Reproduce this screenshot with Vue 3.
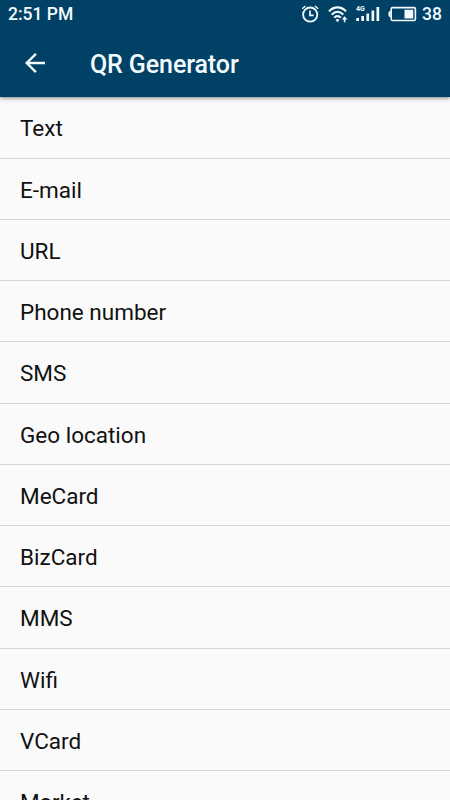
<script setup>
const items = [
  'Text', 'E-mail', 'URL', 'Phone number', 'SMS', 'Geo location',
  'MeCard', 'BizCard', 'MMS', 'Wifi', 'VCard', 'Market',
]
</script>

<template>
  <div class="screen">
    <header class="header">
      <div class="status">
        <span class="time">2:51 PM</span>
        <div class="indicators">
          <svg class="alarm" width="18" height="18" viewBox="0 0 18 18" fill="none" stroke="currentColor">
            <circle cx="9.2" cy="9.6" r="7.1" stroke-width="1.8" />
            <path d="M1.3 3.8 4.4 1M17.1 3.8 14 1" stroke-width="1.5" />
            <path d="M9 5.6V10.3H12.6" stroke-width="1.7" />
          </svg>
          <svg class="wifi" width="20" height="18" viewBox="0 0 20 18" fill="none" stroke="currentColor">
            <path d="M1 6.4C5.8 1 13.2 1 18 6.4M3.7 9.6C7.2 5.8 11.8 5.8 15.3 9.6M6.2 12.6C8.1 10.6 10.9 10.6 12.8 12.6" stroke-width="2.1" />
            <path d="M7.5 14.7Q9.5 13.1 11.5 14.7L9.5 17.2Z" fill="currentColor" stroke="none" />
            <path d="M16.6 11.2 19.4 14.5H17.4V17.2H15.8V14.5H13.8Z" fill="currentColor" stroke="none" />
          </svg>
          <div class="signal">
            <span class="network">4G</span>
            <svg width="24" height="16" viewBox="0 0 24 16" fill="currentColor">
              <path d="M.3 12H3V15H.3ZM5.3 10H8V15H5.3ZM10.4 7.5H13.1V15H10.4ZM15.5 4.5H18.2V15H15.5ZM20.5 1H23.2V15H20.5Z" />
            </svg>
          </div>
          <svg class="battery" width="29" height="16" viewBox="0 0 29 16">
            <rect x="3.2" y="1.6" width="24.2" height="12.9" rx="1.5" fill="none" stroke="currentColor" stroke-width="1.6" />
            <path d="M2.6 5H1.5Q.3 6 .3 8T1.5 11H2.6ZM16.5 3.7H25.2V12.4H16.5Z" fill="currentColor" />
          </svg>
          <span class="percent">38</span>
        </div>
      </div>
      <div class="toolbar">
        <svg class="back" width="22" height="22" viewBox="0 0 22 22" fill="none" stroke="currentColor" stroke-width="2.4">
          <path d="M21 11H3M11.9 1.8 2.7 11 11.9 20.2" />
        </svg>
        <h1 class="title">QR Generator</h1>
      </div>
    </header>
    <ul class="list">
      <li v-for="item in items" :key="item" class="row">{{ item }}</li>
    </ul>
  </div>
</template>

<style>
body { margin: 0; overflow: hidden; }
</style>

<style scoped>
.screen {
  width: 450px;
  height: 800px;
  overflow: hidden;
  background: #fafafa;
  font-family: Roboto, sans-serif;
}
.header {
  position: relative;
  height: 97px;
  background: #004165;
  color: #f4fbff;
  box-shadow: 0 1px 4px rgba(0, 0, 0, .5);
}
.status {
  display: flex;
  justify-content: space-between;
  align-items: center;
  height: 28px;
  padding: 0 8px;
  font-size: 17.5px;
  font-weight: 500;
}
.time, .percent { line-height: 28px; }
.indicators { display: flex; align-items: center; }
.wifi { margin-left: 9px; }
.signal { position: relative; height: 16px; margin-left: 8px; }
.signal svg { display: block; }
.network {
  position: absolute;
  left: 0;
  top: 0;
  font-size: 7px;
  line-height: 7px;
  font-weight: 700;
}
.battery { margin-left: 8px; }
.percent { margin-left: 5px; }
.toolbar {
  display: flex;
  align-items: center;
  height: 69px;
  padding: 0 24px;
}
.title {
  margin: 4px 0 0 44px;
  font-size: 25px;
  font-weight: 500;
  line-height: 30px;
  letter-spacing: -.1px;
}
.list { margin: 0; padding: .25px 0 0; list-style: none; }
.row {
  box-sizing: border-box;
  height: 61.25px;
  padding-left: 20px;
  border-bottom: 1px solid #d4d4d4;
  color: #111;
  font-size: 22.5px;
  line-height: 62px;
}
</style>
